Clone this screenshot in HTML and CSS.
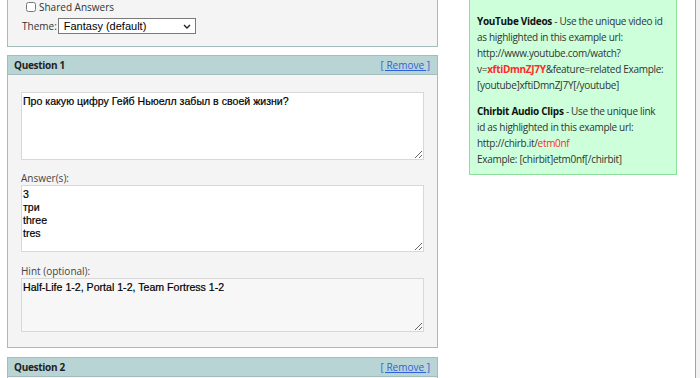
FILE: index.html
```html
<!DOCTYPE html>
<html lang="en">
<head>
  <meta charset="UTF-8">
  <title>Quiz Editor</title>
  <link rel="stylesheet" href="styles.css">
</head>
<body>
  <div class="page">
    <div class="main">
      <div class="panel settings">
        <div class="row check-row">
          <input type="checkbox" id="shared">
          <label for="shared">Shared Answers</label>
        </div>
        <div class="row theme-row">
          <span>Theme:</span>
          <div class="select-wrap">
            <select>
              <option>Fantasy (default)</option>
              <option>Sci-Fi</option>
              <option>Classic</option>
            </select>
            <svg class="chev" width="8" height="5" viewBox="0 0 8 5"><path d="M1 1l3 3 3-3" fill="none" stroke="#222" stroke-width="1.4"/></svg>
          </div>
        </div>
      </div>

      <div class="panel question">
        <div class="q-head">
          <span>Question 1</span>
          <a href="#">[ Remove ]</a>
        </div>
        <div class="q-body">
          <textarea class="q-text">Про какую цифру Гейб Ньюелл забыл в своей жизни?</textarea>
          <label>Answer(s):</label>
          <textarea class="q-answers">3
три
three
tres</textarea>
          <label>Hint (optional):</label>
          <textarea class="q-hint">Half-Life 1-2, Portal 1-2, Team Fortress 1-2</textarea>
        </div>
      </div>

      <div class="panel question">
        <div class="q-head">
          <span>Question 2</span>
          <a href="#">[ Remove ]</a>
        </div>
        <div class="q-body">
          <textarea class="q-text"></textarea>
        </div>
      </div>
    </div>

    <div class="side">
      <div class="help">
        <p class="prev">Example: [img]imgur.com/a/gallery.jpg[/img]</p>
        <p><b>YouTube Videos</b> - Use the unique video id as highlighted in this example url: http://www.youtube.com/watch?<wbr>v=<b class="hl">xftiDmnZJ7Y</b>&amp;feature=related Example: [youtube]xftiDmnZJ7Y[/youtube]</p>
        <p><b>Chirbit Audio Clips</b> - Use the unique link<br>id as highlighted in this example url: http://chirb.it/<span class="hl">etm0nf</span><br>Example: [chirbit]etm0nf[/chirbit]</p>
      </div>
    </div>
  </div>
</body>
</html>
```

FILE: styles.css
```css
body {
  margin: 0;
  font-family: "Open Sans", sans-serif;
  font-size: 10px;
  color: #333;
  background: #f2f2f2;
}
.page {
  display: flex;
  align-items: flex-start;
  width: 695px;
  height: 400px;
  margin-top: -10px;
  background: #fff;
  border-right: 1px solid #a3a3a3;
  overflow: hidden;
}
.main {
  width: 431px;
  margin-left: 7px;
  flex-shrink: 0;
}
.panel {
  border: 1px solid #a3bdbd;
  background: #f4f4f4;
  box-sizing: border-box;
}
.settings {
  padding: 8px 13px 12px 14px;
  margin-bottom: 8px;
}
.row {
  display: flex;
  align-items: center;
}
.check-row {
  height: 16px;
}
.check-row input {
  width: 10px;
  height: 10px;
  margin: 0 3px 0 4px;
}
.theme-row {
  height: 17px;
  margin-top: 2px;
  gap: 1px;
}
.select-wrap {
  position: relative;
}
.select-wrap select {
  appearance: none;
  width: 138px;
  height: 16px;
  padding: 0 0 0 5px;
  border: 1px solid #7a7a7a;
  border-radius: 0;
  background: #fff;
  font-family: "Liberation Sans", Arial, sans-serif;
  font-size: 11px;
  color: #000;
  display: block;
}
.chev {
  position: absolute;
  right: 5px;
  top: 6px;
  pointer-events: none;
}
.question {
  margin-bottom: 9px;
}
.q-head {
  display: flex;
  justify-content: space-between;
  align-items: center;
  height: 18px;
  padding: 0 7px 0 6px;
  background: #b8d4d4;
  border-bottom: 1px solid #a3bdbd;
}
.q-head span {
  font-weight: bold;
  color: #222;
  letter-spacing: -0.3px;
}
.q-head a {
  color: #2f62d8;
}
.q-body {
  padding: 17px 13px 15px;
}
.q-body label {
  display: block;
  height: 13px;
  line-height: 13px;
  color: #444;
}
textarea {
  display: block;
  width: 403px;
  box-sizing: border-box;
  padding: 2px 1px;
  border: 1px solid #d8d8d8;
  background: #fff;
  font-family: "Liberation Sans", Arial, sans-serif;
  font-size: 10.6px;
  line-height: 13px;
  color: #000;
  -webkit-text-stroke: 0.2px #000;
  resize: vertical;
}
.q-text {
  height: 68px;
}
.q-answers {
  height: 67px;
}
.q-body label:first-of-type {
  margin-top: 12px;
}
.q-body label + textarea + label {
  margin-top: 13px;
}
.q-hint {
  height: 54px;
  background: #f7f7f7;
}
.side {
  width: 208px;
  margin-left: 31px;
  margin-top: -13px;
}
.help {
  border: 1px solid #8fdf9c;
  background: #ccffda;
  padding: 7px;
  line-height: 16px;
  letter-spacing: -0.3px;
  color: #333;
}
.help p {
  margin: 0 0 10px;
}
.help .prev {
  white-space: nowrap;
  margin-bottom: 12px;
}
.help p:last-child {
  margin-bottom: 0;
}
.help b {
  color: #111;
}
.help .hl {
  color: #ff2a2a;
}
```
